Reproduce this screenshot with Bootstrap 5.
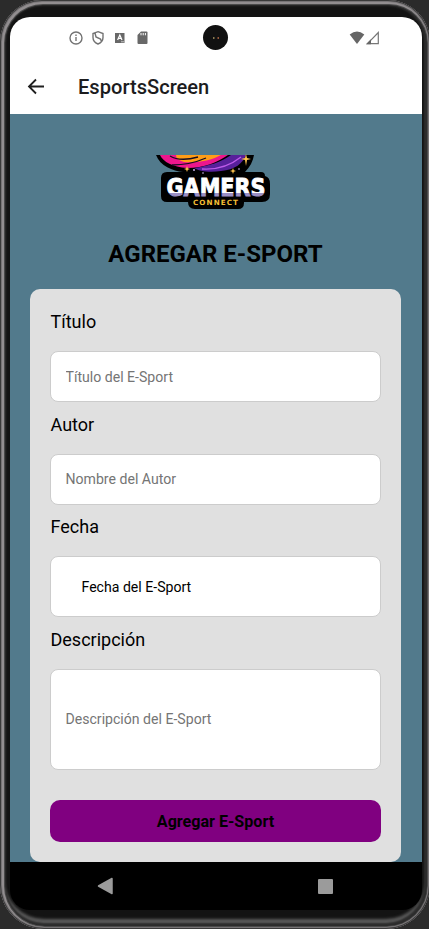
<!DOCTYPE html>
<html lang="es">
<head>
<meta charset="utf-8">
<meta name="viewport" content="width=device-width, initial-scale=1">
<title>EsportsScreen</title>
<link rel="stylesheet" href="https://cdn.jsdelivr.net/npm/bootstrap@5.3.0/dist/css/bootstrap.min.css">
<style>
body{font-family:Roboto,sans-serif;background:#2b2b2b;width:429px;height:929px;line-height:1.2;color:#000;overflow:hidden}
.phone{width:430px;height:929px;padding:17px 8px 19px 10px;background:#131313;border-radius:42px 42px 44px 44px;
box-shadow:inset 0 0 0 1px #3a3a3a,inset 0 0 0 2px #777476,inset 1px 1px 0 3px #928e90,inset 1px 1px 0 4px #4a4a4a,inset 0 0 2px 6px #2c2c2c,inset 0 -6px 3px 4px #5c5c5c}
.display{width:412px;height:893px;border-radius:20px;background:#000}
.status{height:42px;padding:0 42px 0 59px}
.camera{width:25px;height:25px;background:#111;left:193px;top:8px}
.appbar{height:55px;padding-left:15px}
.appbar h1{font-size:20.1px;font-weight:500;color:#1c1c1e;margin-left:30px;padding-top:2px}
.content{height:748px;background:#527a8c;padding:41px 21px 0 20px}
.logo{margin-left:126px;overflow:visible}
.heading{font-size:24px;height:30px;line-height:30px;margin-top:29px}
.panel{background:#e0e0e0;border-radius:10px;height:573px;margin-top:20px;padding:21px 20px 0}
.form-label{font-size:18px;line-height:24px;height:24px;margin:0 0 17px .5px}
.form-control{border:1px solid #ccc;border-radius:8px;padding:0 14px 0 14.500px;font-size:14.1px;height:51px;margin-bottom:10.5px;background:#fff;color:#000;line-height:18px}
.form-control::placeholder{color:#757575;opacity:1}
.date{height:61px;padding-left:30.5px}
.desc{height:101px;margin-bottom:30px}
.submit{background:#800080;border-radius:10px;height:42px;font-size:16.1px;line-height:20px;color:#000;border:0}
.submit span{padding-top:3px}
.navkeys{height:48px;padding:0 88px 0 87px}
</style>
</head>
<body>
<div class="phone overflow-hidden">
<div class="display position-relative overflow-hidden">
<header class="bg-white">
<div class="status d-flex align-items-center justify-content-between">
<svg width="82" height="16" viewBox="0 0 82 16" fill="none" stroke="#737373" stroke-width="1.4">
<circle cx="7" cy="8" r="6"/><path d="M7 7v4M7 4.400v1.500"/>
<path d="M29 1.700l5 1.800v4c0 3-2 5.300-5 6.500-3-1.200-5-3.500-5-6.500v-4zM26 3l1 4 4.500 2 1 2.500"/>
<path d="M46 3h9.500v10H46z" fill="#686868" stroke="none"/><path d="M48.600 10l2.200-5 2.200 5M49.500 8.400h2.700" stroke="#fff" stroke-width="1.200"/><path d="M52 11.800h3" stroke="#ddd" stroke-width=".8"/>
<path d="M72 1.500h5.500a1 1 0 011 1v10.500a1 1 0 01-1 1h-8a1 1 0 01-1-1V5z" fill="#686868" stroke="none"/><path d="M72 3v2.300M74.200 3v2.300M76.400 3v2.300" stroke="#fff" stroke-width="1"/>
</svg>
<svg width="31" height="14" viewBox="0 0 31 14"><path d="M.7 3.500Q8-2.500 15.300 3.500L8 13z" fill="#666"/><path d="M29.300 1.500v11.200H18.500z" fill="none" stroke="#777" stroke-width="1.200"/><path d="M17 13.200l5-5v5z" fill="#666"/></svg>
</div>
<span class="camera position-absolute rounded-circle d-flex align-items-center justify-content-center"><svg width="13" height="4"><rect x="4" y="1" width="1.500" height="2" fill="#8a7a50"/><rect x="8.500" y="1" width="1.500" height="2" fill="#95573a"/></svg></span>
<div class="appbar d-flex align-items-center">
<svg width="23" height="20" viewBox="0 0 23 20" fill="none" stroke="#202020" stroke-width="1.800"><path d="M19 9.500H4.500M11 2.500L4 9.500l7 7"/></svg>
<h1 class="mb-0">EsportsScreen</h1>
</div>
</header>
<main class="content">
<svg class="logo d-block" width="116" height="55" viewBox="0 0 116 55">
<path d="M0 0h98c-1 6-4 12-9 17h16q4 0 4 4 5 1 5 8v10q0 8-8 8H88v1q0 6-6 6H39q-7 0-7-7H11q-6 0-6-6V23q0-6 6-6h16C17 16 4 11 0 0z"/>
<path d="M4 0h68C62 7 48 13 31 13 17 12 7 7 4 0z" fill="#ed168d"/>
<path d="M20 0h45C56 5 44 8 28 7 22 5 20 3 20 0z" fill="#ff9d17"/>
<path d="M14 1q10 6 28 1M16 10q18 0 34-7" fill="none" stroke="#170d20" stroke-width="1.300"/>
<path d="M38 13C53 11 65 7 75 0h15c-3 8-11 15-25 16-12 2-22 0-27-3z" fill="#57209b"/>
<path d="M46 14c16 1 29-4 39-12" fill="none" stroke="#bd5be9" stroke-width="1.300"/>
<path d="M90-1l1 4 4 1-4 1-1 6-1-6-4-1 4-1zM31 11l.8 2.200L34 14l-2.200.8L31 17l-.8-2.200L28 14l2.200-.8zM77 13l.8 2.200L80 16l-2.200.8L77 19l-.8-2.200L74 16l2.200-.8z" fill="#ffc34e"/>
<g fill="#ddc5ff"><circle cx="38" cy="15" r=".9"/><circle cx="47" cy="18" r=".8"/><circle cx="83" cy="14" r=".8"/></g>
<defs><linearGradient id="silver" gradientUnits="userSpaceOnUse" x1="0" y1="22" x2="0" y2="42"><stop offset=".8" stop-color="#fff"/><stop offset=".81" stop-color="#9b8fc4"/></linearGradient></defs>
<text x="10.500" y="41" textLength="99" lengthAdjust="spacingAndGlyphs" font-family="DejaVu Sans" font-weight="700" font-size="25" fill="url(#silver)" stroke="url(#silver)" stroke-width="1">GAMERS</text>
<text x="37" y="50.300" textLength="45" font-family="DejaVu Sans" font-weight="700" font-size="7.200" fill="#f3bd34">CONNECT</text>
</svg>
<h2 class="heading fw-bold text-center mb-0">AGREGAR E-SPORT</h2>
<form class="panel">
<label class="form-label d-block" for="t">Título</label>
<input class="form-control" id="t" placeholder="Título del E-Sport">
<label class="form-label d-block" for="a">Autor</label>
<input class="form-control" id="a" placeholder="Nombre del Autor">
<label class="form-label d-block">Fecha</label>
<div class="form-control date d-flex align-items-center">Fecha del E-Sport</div>
<label class="form-label d-block" for="d">Descripción</label>
<input class="form-control desc" id="d" placeholder="Descripción del E-Sport">
<button type="button" class="submit btn w-100 p-0 fw-bold d-flex align-items-center justify-content-center"><span>Agregar E-Sport</span></button>
</form>
</main>
<nav class="navkeys d-flex align-items-center justify-content-between">
<svg width="17" height="18"><path d="M15 1.500v15L1.500 9z" fill="#9b9b9b" stroke="#9b9b9b" stroke-width="1.500" stroke-linejoin="round"/></svg>
<svg width="17" height="17"><rect x="1" y="1" width="15" height="15" rx="1" fill="#9b9b9b"/></svg>
</nav>
</div>
</div>
<script src="https://cdn.jsdelivr.net/npm/bootstrap@5.3.0/dist/js/bootstrap.bundle.min.js"></script>
</body>
</html>
